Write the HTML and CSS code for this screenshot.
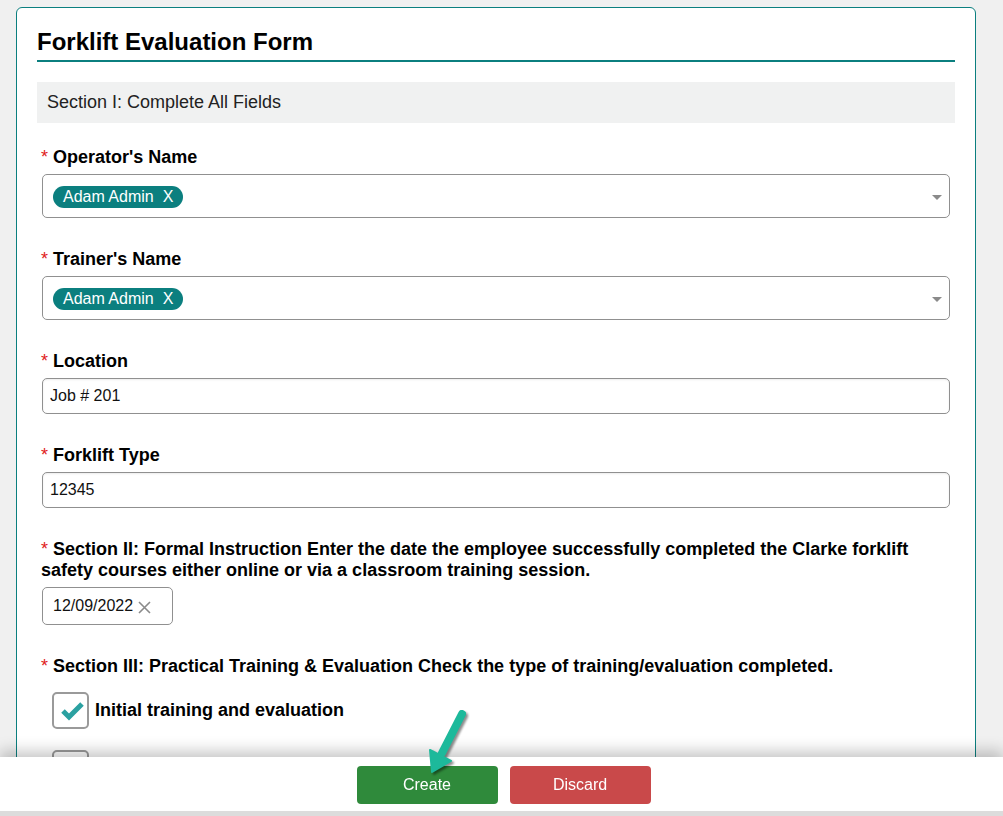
FILE: index.html
```html
<!DOCTYPE html>
<html lang="en">
<head>
    <meta charset="UTF-8">
    <meta name="viewport" content="width=device-width, initial-scale=1.0">
    <title>Forklift Evaluation Form</title>
    <link rel="stylesheet" href="styles.css">
</head>
<body>
    <div class="card">
        <h1 class="form-title">Forklift Evaluation Form</h1>
        <div class="section-head">Section I: Complete All Fields</div>

        <div class="fields">
            <div class="field">
                <label class="field-label required">Operator's Name</label>
                <div class="multi-select">
                    <span class="chip">Adam Admin<span class="chip-x">X</span></span>
                    <span class="caret"></span>
                </div>
            </div>

            <div class="field">
                <label class="field-label required">Trainer's Name</label>
                <div class="multi-select">
                    <span class="chip">Adam Admin<span class="chip-x">X</span></span>
                    <span class="caret"></span>
                </div>
            </div>

            <div class="field">
                <label class="field-label required">Location</label>
                <input class="text-input" type="text" value="Job # 201">
            </div>

            <div class="field">
                <label class="field-label required">Forklift Type</label>
                <input class="text-input" type="text" value="12345">
            </div>

            <div class="field">
                <label class="field-label required">Section II: Formal Instruction Enter the date the employee successfully completed the Clarke forklift safety courses either online or via a classroom training session.</label>
                <div class="date-input">
                    <span class="date-value">12/09/2022</span>
                    <svg class="date-clear" width="15" height="15" viewBox="0 0 15 15">
                        <path d="M2 2 L13 13 M13 2 L2 13" stroke="#8a8a8a" stroke-width="1.6" fill="none"/>
                    </svg>
                </div>
            </div>

            <div class="field">
                <label class="field-label required">Section III: Practical Training &amp; Evaluation Check the type of training/evaluation completed.</label>
                <div class="check-list">
                    <label class="check-row">
                        <span class="checkbox">
                            <svg width="33" height="33" viewBox="0 0 33 33">
                                <path d="M9 17 L15 23 L28 10" stroke="#2ba1a1" stroke-width="5" fill="none"/>
                            </svg>
                        </span>
                        Initial training and evaluation
                    </label>
                    <label class="check-row">
                        <span class="checkbox"></span>
                        Refresher training and evaluation
                    </label>
                </div>
            </div>
        </div>
    </div>

    <footer class="action-bar">
        <button class="btn btn-create">Create</button>
        <button class="btn btn-discard">Discard</button>

        <!-- pointer drawn over the bar -->
        <svg class="pointer-arrow" width="56" height="76" viewBox="0 0 56 76">
            <line x1="42" y1="9" x2="22" y2="48" stroke="#1db99b" stroke-width="8" stroke-linecap="round"/>
            <polygon points="12,67 10,45 31,56" fill="#1db99b" stroke="#1db99b" stroke-width="2" stroke-linejoin="round"/>
        </svg>
    </footer>
</body>
</html>
```

FILE: styles.css
```css
body {
    margin: 0;
    padding: 7px 0 0 16px;
    background-color: #f0f0f0;
    font-family: 'Liberation Sans', Arial, sans-serif;
    color: #111;
}

.card {
    width: 960px;
    box-sizing: border-box;
    background-color: #fff;
    border: 1px solid #0b7f7f;
    border-radius: 6px;
    padding: 20px 20px 40px 20px;
}

.form-title {
    margin: 0;
    font-size: 24px;
    line-height: 28px;
    font-weight: bold;
    color: #000;
    padding-bottom: 4px;
    border-bottom: 2px solid #0b7f7f;
}

.section-head {
    margin-top: 20px;
    height: 41px;
    line-height: 41px;
    padding: 0 10px;
    background-color: #f0f1f1;
    font-size: 18px;
    color: #222;
}

.fields {
    display: flex;
    flex-direction: column;
    gap: 31px;
    padding: 24px 5px 0 5px;
}

.field {
    display: flex;
    flex-direction: column;
}

.field-label {
    font-size: 18px;
    line-height: 21px;
    font-weight: bold;
    color: #000;
    margin-bottom: 6px;
    margin-left: -1px;
}

.required::before {
    content: "*";
    color: #e02020;
    font-weight: normal;
    margin-right: 5px;
}

.multi-select {
    height: 44px;
    box-sizing: border-box;
    border: 1px solid #909090;
    border-radius: 5px;
    display: flex;
    align-items: center;
    justify-content: space-between;
    padding: 0 7px 0 10px;
}

.chip {
    background-color: #0b7f7f;
    color: #fff;
    font-size: 16px;
    line-height: 22px;
    height: 22px;
    border-radius: 11px;
    padding: 0 10px;
    margin-top: 1px;
}

.chip-x {
    margin-left: 9px;
}

.caret {
    width: 0;
    height: 0;
    border-left: 5px solid transparent;
    border-right: 5px solid transparent;
    border-top: 5px solid #8a8a8a;
    margin-top: 2px;
}

.text-input {
    height: 36px;
    box-sizing: border-box;
    border: 1px solid #909090;
    border-radius: 5px;
    padding: 0 7px;
    font-family: 'Liberation Sans', Arial, sans-serif;
    font-size: 16px;
    color: #111;
    box-shadow: inset 0 1px 2px rgba(0, 0, 0, 0.08);
}

.date-input {
    width: 131px;
    height: 38px;
    box-sizing: border-box;
    border: 1px solid #909090;
    border-radius: 5px;
    display: flex;
    align-items: center;
    gap: 4px;
    padding-left: 10px;
    font-size: 16px;
}

.date-clear {
    margin-top: 2px;
}

.field:last-child .field-label {
    margin-bottom: 15px;
}

.check-list {
    display: flex;
    flex-direction: column;
    gap: 21px;
    padding-left: 10px;
}

.check-row {
    display: flex;
    align-items: center;
    gap: 6px;
    font-size: 18px;
    font-weight: bold;
    color: #000;
}

.checkbox {
    width: 37px;
    height: 37px;
    box-sizing: border-box;
    border: 2px solid #9a9a9a;
    border-radius: 5px;
    display: flex;
    align-items: center;
    justify-content: center;
}

.action-bar {
    position: fixed;
    left: 0;
    right: 0;
    bottom: 0;
    height: 59px;
    box-sizing: border-box;
    background-color: #fff;
    border-bottom: 5px solid #dcdcdc;
    box-shadow: 0 -6px 14px rgba(0, 0, 0, 0.22);
    display: flex;
    justify-content: center;
    align-items: flex-start;
    gap: 12px;
    padding: 9px 0 0 4px;
}

.btn {
    width: 141px;
    height: 38px;
    border: none;
    border-radius: 4px;
    color: #fff;
    font-family: 'Liberation Sans', Arial, sans-serif;
    font-size: 16px;
    cursor: pointer;
}

.btn-create {
    background-color: #2f8a3b;
}

.btn-discard {
    background-color: #c9494a;
}

.pointer-arrow {
    position: absolute;
    left: 420px;
    top: -52px;
    filter: drop-shadow(2px 2px 1px rgba(0, 0, 0, 0.45));
}
```
